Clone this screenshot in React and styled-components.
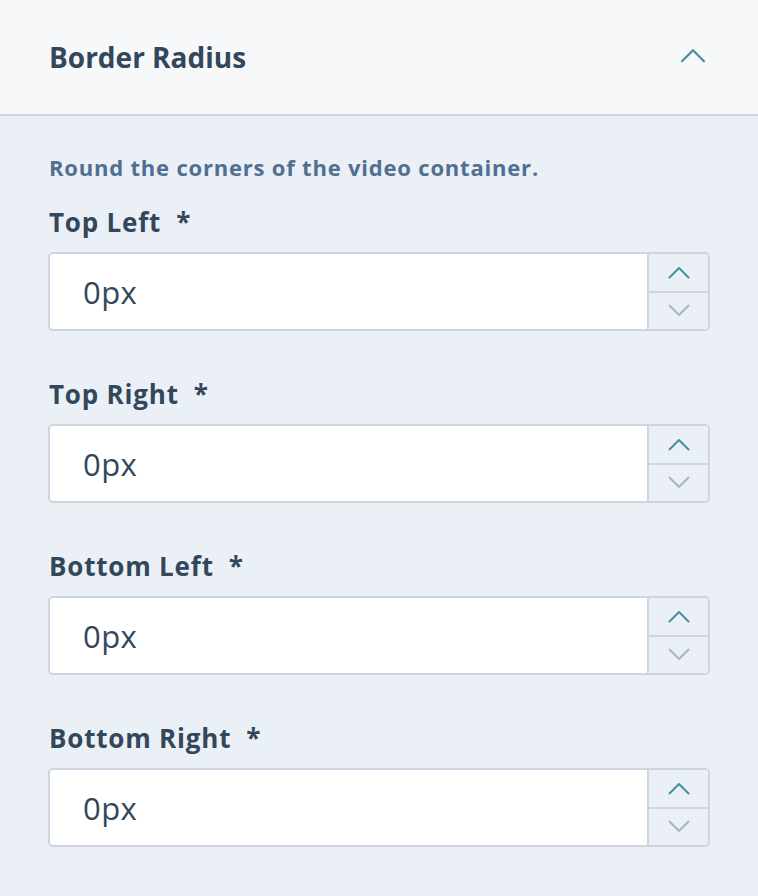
import styled, { createGlobalStyle } from 'styled-components';

const GlobalStyle = createGlobalStyle`
  html, body {
    margin: 0;
    padding: 0;
    background: #eaf0f6;
    font-family: "Open Sans", "Noto Sans", sans-serif;
  }
`;

const Panel = styled.div`
  width: 758px;
  min-height: 896px;
  background: #eaf0f6;
`;

const Header = styled.div`
  height: 116px;
  box-sizing: border-box;
  display: flex;
  align-items: center;
  justify-content: space-between;
  padding: 0 52px 0 49px;
  background: #f6f8fa;
  border-bottom: 2px solid #cbd6e2;
`;

const Title = styled.h2`
  margin: 0;
  font-size: 28px;
  font-weight: 700;
  color: #33475b;
`;

const Body = styled.div`
  padding: 36px 48px 40px 48px;
  display: flex;
  flex-direction: column;
`;

const Description = styled.p`
  margin: 0 0 25px 1px;
  font-size: 22px;
  font-weight: 700;
  color: #516f90;
  line-height: 30px;
  letter-spacing: 0.8px;
`;

const Field = styled.div`
  display: flex;
  flex-direction: column;
  margin-bottom: ${(p) => (p.last ? '0' : '48px')};
`;

const Label = styled.label`
  margin: 0 0 15px 1px;
  font-size: 26px;
  font-weight: 700;
  color: #33475b;
  line-height: 30px;
  letter-spacing: 0.8px;
`;

const Star = styled.span`
  margin-left: 15px;
`;

const InputWrap = styled.div`
  display: flex;
  height: 79px;
  box-sizing: border-box;
  border: 2px solid #cbd6e2;
  border-radius: 5px;
  background: #fff;
  overflow: hidden;
`;

const Input = styled.input`
  flex: 1;
  min-width: 0;
  border: none;
  outline: none;
  padding: 0 0 0 33px;
  font-family: inherit;
  font-size: 31px;
  color: #33475b;
  background: transparent;
  letter-spacing: 0.4px;
`;

const Spinner = styled.div`
  width: 59px;
  display: flex;
  flex-direction: column;
  border-left: 2px solid #cbd6e2;
  background: #eaf0f6;
`;

const SpinButton = styled.button`
  flex: 1;
  border: none;
  padding: 0;
  background: transparent;
  display: flex;
  align-items: center;
  justify-content: center;
  cursor: pointer;
  color: ${(p) => (p.up ? '#4a8ea3' : '#a6b5c4')};
  border-bottom: ${(p) => (p.up ? '2px solid #cbd6e2' : 'none')};
`;

const Chevron = ({ up, size = 22 }) => (
  <svg width={size} height={size / 2 + 2} viewBox="0 0 22 13" fill="none">
    <path
      d={up ? 'M1.5 11.5 L11 2 L20.5 11.5' : 'M1.5 1.5 L11 11 L20.5 1.5'}
      stroke="currentColor"
      strokeWidth="2"
      strokeLinecap="round"
      strokeLinejoin="round"
    />
  </svg>
);

const HeaderToggle = styled.span`
  color: #4a8ea3;
  display: flex;
  margin-top: -3px;
`;

const fields = ['Top Left', 'Top Right', 'Bottom Left', 'Bottom Right'];

export default function App() {
  return (
    <Panel>
      <GlobalStyle />
      <Header>
        <Title>Border Radius</Title>
        <HeaderToggle>
          <Chevron up size={26} />
        </HeaderToggle>
      </Header>
      <Body>
        <Description>Round the corners of the video container.</Description>
        {fields.map((name, i) => (
          <Field key={name} last={i === fields.length - 1}>
            <Label>
              {name}
              <Star>*</Star>
            </Label>
            <InputWrap>
              <Input defaultValue="0px" />
              <Spinner>
                <SpinButton up>
                  <Chevron up />
                </SpinButton>
                <SpinButton>
                  <Chevron />
                </SpinButton>
              </Spinner>
            </InputWrap>
          </Field>
        ))}
      </Body>
    </Panel>
  );
}
